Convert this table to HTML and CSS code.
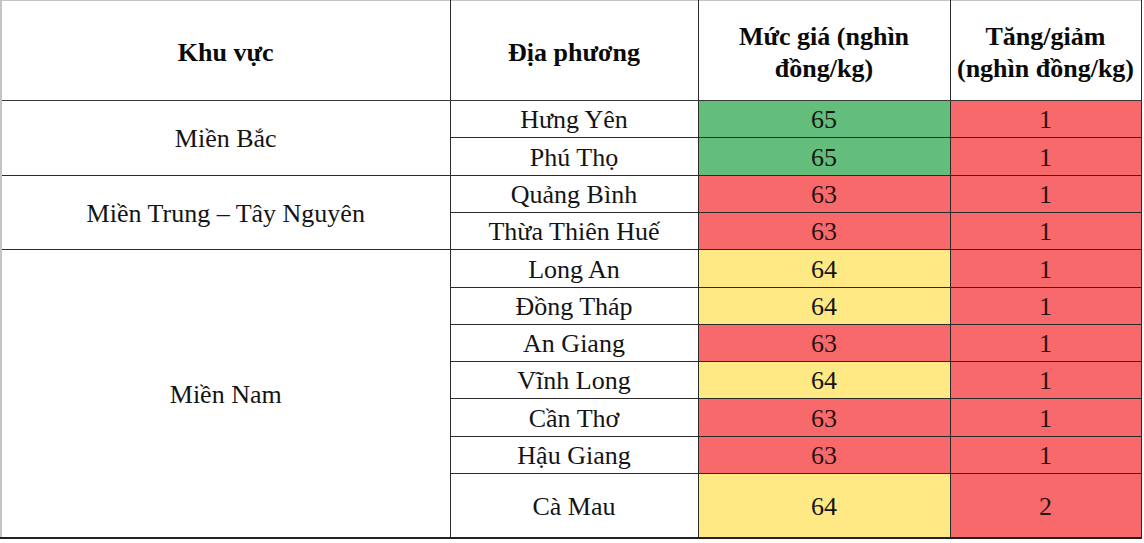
FILE: index.html
```html
<!DOCTYPE html>
<html lang="vi">
<head>
<meta charset="utf-8">
<title>Giá lợn hơi</title>
<link rel="stylesheet" href="styles.css">
</head>
<body>
<table class="price-table">
  <colgroup>
    <col class="c1"><col class="c2"><col class="c3"><col class="c4">
  </colgroup>
  <thead>
    <tr class="head">
      <th>Khu vực</th>
      <th>Địa phương</th>
      <th>Mức giá (nghìn<br>đồng/kg)</th>
      <th>Tăng/giảm<br>(nghìn đồng/kg)</th>
    </tr>
  </thead>
  <tbody>
    <tr class="r37">
      <td rowspan="2" class="region">Miền Bắc</td>
      <td>Hưng Yên</td><td class="green">65</td><td class="red">1</td>
    </tr>
    <tr class="r38">
      <td>Phú Thọ</td><td class="green">65</td><td class="red">1</td>
    </tr>
    <tr class="r37">
      <td rowspan="2" class="region">Miền Trung – Tây Nguyên</td>
      <td>Quảng Bình</td><td class="red">63</td><td class="red">1</td>
    </tr>
    <tr class="r37">
      <td>Thừa Thiên Huế</td><td class="red">63</td><td class="red">1</td>
    </tr>
    <tr class="r38">
      <td rowspan="7" class="region">Miền Nam</td>
      <td>Long An</td><td class="yellow">64</td><td class="red">1</td>
    </tr>
    <tr class="r37">
      <td>Đồng Tháp</td><td class="yellow">64</td><td class="red">1</td>
    </tr>
    <tr class="r37">
      <td>An Giang</td><td class="red">63</td><td class="red">1</td>
    </tr>
    <tr class="r37">
      <td>Vĩnh Long</td><td class="yellow">64</td><td class="red">1</td>
    </tr>
    <tr class="r38">
      <td>Cần Thơ</td><td class="red">63</td><td class="red">1</td>
    </tr>
    <tr class="r36">
      <td>Hậu Giang</td><td class="red">63</td><td class="red">1</td>
    </tr>
    <tr class="r66">
      <td>Cà Mau</td><td class="yellow">64</td><td class="red">2</td>
    </tr>
  </tbody>
</table>
</body>
</html>
```

FILE: styles.css
```css
html, body {
  margin: 0;
  padding: 0;
  background: #ffffff;
}

.price-table {
  border-collapse: collapse;
  table-layout: fixed;
  width: 1140px;
  font-family: "Liberation Serif", "Times New Roman", serif;
  font-size: 26px;
  color: #141414;
  border-left: 2px solid #c4c4c4;
  border-top: 1px solid #c4c4c4;
  border-right: 1px solid #222;
  border-bottom: 2px solid #222;
}

.c1 { width: 449px; }
.c2 { width: 248px; }
.c3 { width: 252px; }
.c4 { width: 191px; }

.price-table th,
.price-table td {
  border: 1px solid #2a2a2a;
  text-align: center;
  vertical-align: middle;
  padding: 0 4px;
  line-height: 1.25;
  overflow: hidden;
  white-space: nowrap;
}

.price-table th {
  font-weight: bold;
  color: #0a0a0a;
  padding-top: 5px;
}

.price-table thead tr th {
  border-top-color: #c4c4c4;
  border-bottom-color: #3a3a3a;
}

.price-table tr > :first-child {
  border-left-color: #c4c4c4;
}

.head { height: 100px; }
.r36 { height: 36px; }
.r37 { height: 37px; }
.r38 { height: 38px; }
.r66 { height: 65px; }

.price-table td {
  padding-top: 3px;
}

.green { background: #63be7b; }
.red { background: #f8696b; color: #2a1212; }
.yellow { background: #ffe984; }
```
